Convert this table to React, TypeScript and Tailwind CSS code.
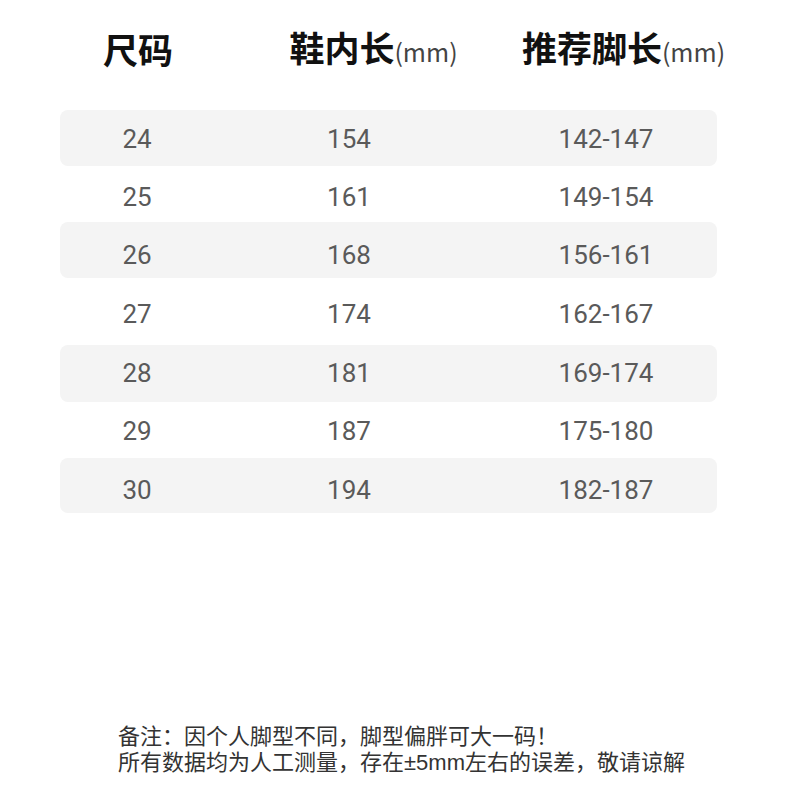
import React from "react";

const rows = [
  { s: "24", a: "154", b: "142-147", cls: "h-[56px] pt-[16px] bg-[#f4f4f4] rounded-lg" },
  { s: "25", a: "161", b: "149-154", cls: "h-[56px] pt-[18px]" },
  { s: "26", a: "168", b: "156-161", cls: "h-[56px] pt-[20px] bg-[#f4f4f4] rounded-lg" },
  { s: "27", a: "174", b: "162-167", cls: "h-[67px] pt-[23px]" },
  { s: "28", a: "181", b: "169-174", cls: "h-[57px] pt-[15px] bg-[#f4f4f4] rounded-lg" },
  { s: "29", a: "187", b: "175-180", cls: "h-[56px] pt-[16px]" },
  { s: "30", a: "194", b: "182-187", cls: "h-[55px] pt-[19px] bg-[#f4f4f4] rounded-lg" },
];

const cjk = { fontFamily: '"Noto Sans CJK SC", "Noto Sans", sans-serif' };

export default function App() {
  return (
    <div className="w-[800px] h-[800px] bg-white flex flex-col" style={cjk}>
      <div className="h-[98px] flex items-center pl-[60px] shrink-0">
        <div className="w-[156px] shrink-0 flex justify-center">
          <span className="text-[35px] leading-[40px] font-bold text-[#111] whitespace-nowrap">尺码</span>
        </div>
        <div className="w-[315px] shrink-0 flex justify-center items-baseline whitespace-nowrap">
          <span className="text-[35px] leading-[40px] font-bold text-[#111]">鞋内长</span>
          <span className="text-[25px] leading-[40px] text-[#444]">(mm)</span>
        </div>
        <div className="w-[185px] shrink-0 flex justify-center items-baseline whitespace-nowrap">
          <span className="text-[35px] leading-[40px] font-bold text-[#111]">推荐脚长</span>
          <span className="text-[25px] leading-[40px] text-[#444]">(mm)</span>
        </div>
      </div>
      <div className="mt-[12px] ml-[60px] w-[657px] flex flex-col shrink-0">
        {rows.map((r) => (
          <div key={r.s} className={"flex items-start text-[26px] leading-[26px] text-[#5a5a5a] " + r.cls} style={{ fontFamily: 'Roboto, "Noto Sans", sans-serif' }}>
            <div className="w-[154px] shrink-0 text-center">{r.s}</div>
            <div className="w-[270px] shrink-0 text-center">{r.a}</div>
            <div className="w-[244px] shrink-0 text-center">{r.b}</div>
          </div>
        ))}
      </div>
      <div
        className="mt-[211px] pl-[118px] text-[22px] leading-[26px] text-[#333] whitespace-nowrap"
        style={{ fontFamily: '"Liberation Sans", "Noto Sans CJK SC", sans-serif' }}
      >
        <div>备注：因个人脚型不同，脚型偏胖可大一码！</div>
        <div>所有数据均为人工测量，存在±5mm左右的误差，敬请谅解</div>
      </div>
    </div>
  );
}
